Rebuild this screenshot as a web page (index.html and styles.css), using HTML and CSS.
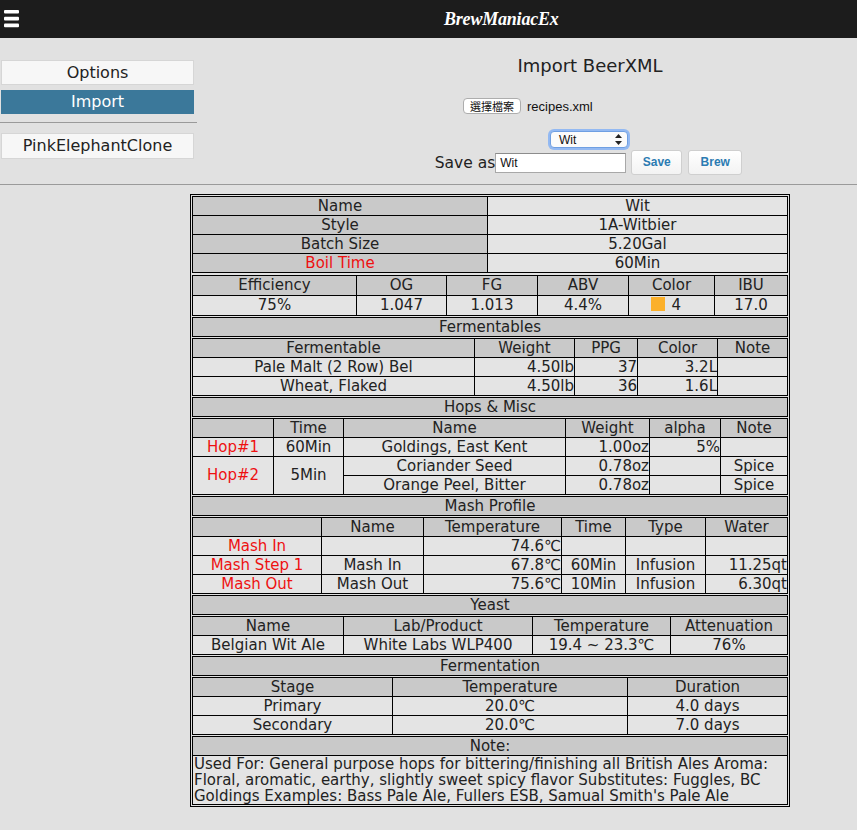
FILE: index.html
```html
<!DOCTYPE html>
<html>
<head>
<meta charset="utf-8">
<link rel="stylesheet" href="styles.css">
</head>
<body>
<header class="topbar">
  <svg class="burger" width="16" height="19" viewBox="0 0 16 19">
    <rect x="0" y="0" width="15" height="3.6" rx="1" fill="#fff"/>
    <rect x="0" y="6.8" width="15" height="3.6" rx="1" fill="#fff"/>
    <rect x="0" y="13.6" width="15" height="3.6" rx="1" fill="#fff"/>
  </svg>
  <div class="brand">BrewManiacEx</div>
</header>

<section class="top">
  <nav class="side">
    <div class="nav-btn">Options</div>
    <div class="nav-btn active">Import</div>
    <hr class="side-hr">
    <div class="nav-btn tall">PinkElephantClone</div>
  </nav>
  <div class="main">
    <h1 class="title">Import BeerXML</h1>
    <div class="file-row">
      <span class="file-btn">選擇檔案</span>
      <span class="file-name">recipes.xml</span>
    </div>
    <div class="select">
      <span>Wit</span>
      <svg width="7" height="11" viewBox="0 0 7 11"><path d="M3.5 0 L7 4 L0 4 Z M3.5 11 L7 7 L0 7 Z" fill="#222"/></svg>
    </div>
    <div class="save-row">
      <span class="save-label">Save as</span>
      <span class="text-input">Wit</span>
      <span class="btn save">Save</span>
      <span class="btn brew">Brew</span>
    </div>
  </div>
</section>

<div class="recipe">
  <table class="t">
    <colgroup><col style="width:295px"><col></colgroup>
    <tr><td class="h">Name</td><td>Wit</td></tr>
    <tr><td class="h">Style</td><td>1A-Witbier</td></tr>
    <tr><td class="h">Batch Size</td><td>5.20Gal</td></tr>
    <tr><td class="h red">Boil Time</td><td>60Min</td></tr>
  </table>

  <table class="t stats">
    <colgroup><col style="width:164px"><col style="width:90px"><col style="width:91px"><col style="width:91px"><col style="width:86px"><col></colgroup>
    <tr class="hr"><td>Efficiency</td><td>OG</td><td>FG</td><td>ABV</td><td>Color</td><td>IBU</td></tr>
    <tr><td>75%</td><td>1.047</td><td>1.013</td><td>4.4%</td><td class="color-cell"><span class="swatch"></span> 4</td><td>17.0</td></tr>
  </table>

  <table class="t sec"><tr><td>Fermentables</td></tr></table>
  <table class="t">
    <colgroup><col style="width:282px"><col style="width:100px"><col style="width:63px"><col style="width:80px"><col></colgroup>
    <tr class="hr"><td>Fermentable</td><td>Weight</td><td>PPG</td><td>Color</td><td>Note</td></tr>
    <tr><td>Pale Malt (2 Row) Bel</td><td class="r">4.50lb</td><td class="r">37</td><td class="r">3.2L</td><td></td></tr>
    <tr><td>Wheat, Flaked</td><td class="r">4.50lb</td><td class="r">36</td><td class="r">1.6L</td><td></td></tr>
  </table>

  <table class="t sec"><tr><td>Hops &amp; Misc</td></tr></table>
  <table class="t">
    <colgroup><col style="width:81px"><col style="width:70px"><col style="width:222px"><col style="width:84px"><col style="width:71px"><col></colgroup>
    <tr class="hr"><td></td><td>Time</td><td>Name</td><td>Weight</td><td>alpha</td><td>Note</td></tr>
    <tr><td class="red">Hop#1</td><td>60Min</td><td>Goldings, East Kent</td><td class="r">1.00oz</td><td class="r">5%</td><td></td></tr>
    <tr><td class="red" rowspan="2">Hop#2</td><td rowspan="2">5Min</td><td>Coriander Seed</td><td class="r">0.78oz</td><td></td><td>Spice</td></tr>
    <tr><td>Orange Peel, Bitter</td><td class="r">0.78oz</td><td></td><td>Spice</td></tr>
  </table>

  <table class="t sec"><tr><td>Mash Profile</td></tr></table>
  <table class="t">
    <colgroup><col style="width:129px"><col style="width:102px"><col style="width:138px"><col style="width:64px"><col style="width:80px"><col></colgroup>
    <tr class="hr"><td></td><td>Name</td><td>Temperature</td><td>Time</td><td>Type</td><td>Water</td></tr>
    <tr><td class="red">Mash In</td><td></td><td class="r">74.6℃</td><td></td><td></td><td></td></tr>
    <tr><td class="red">Mash Step 1</td><td>Mash In</td><td class="r">67.8℃</td><td>60Min</td><td>Infusion</td><td class="r">11.25qt</td></tr>
    <tr><td class="red">Mash Out</td><td>Mash Out</td><td class="r">75.6℃</td><td>10Min</td><td>Infusion</td><td class="r">6.30qt</td></tr>
  </table>

  <table class="t sec"><tr><td>Yeast</td></tr></table>
  <table class="t">
    <colgroup><col style="width:151px"><col style="width:189px"><col style="width:138px"><col></colgroup>
    <tr class="hr"><td>Name</td><td>Lab/Product</td><td>Temperature</td><td>Attenuation</td></tr>
    <tr><td>Belgian Wit Ale</td><td>White Labs WLP400</td><td>19.4 ~ 23.3℃</td><td>76%</td></tr>
  </table>

  <table class="t sec"><tr><td>Fermentation</td></tr></table>
  <table class="t">
    <colgroup><col style="width:200px"><col style="width:235px"><col></colgroup>
    <tr class="hr"><td>Stage</td><td>Temperature</td><td>Duration</td></tr>
    <tr><td>Primary</td><td>20.0℃</td><td>4.0 days</td></tr>
    <tr><td>Secondary</td><td>20.0℃</td><td>7.0 days</td></tr>
  </table>

  <table class="t note">
    <tr class="hr"><td>Note:</td></tr>
    <tr><td class="note-body">Used For: General purpose hops for bittering/finishing all British Ales Aroma: Floral, aromatic, earthy, slightly sweet spicy flavor Substitutes: Fuggles, BC Goldings Examples: Bass Pale Ale, Fullers ESB, Samual Smith's Pale Ale</td></tr>
  </table>
</div>
</body>
</html>
```
FILE: styles.css
```css
* { box-sizing: border-box; }
html, body { margin: 0; padding: 0; }
body {
  background: #e1e1e1;
  font-family: "DejaVu Sans", sans-serif;
  color: #222;
  overflow: hidden;
  width: 857px;
  height: 830px;
}
.topbar {
  height: 38px;
  background: #1c1c1c;
  display: flex;
  align-items: center;
  padding-left: 4px;
}
.burger { display: block; }
.brand {
  margin-left: 424px;
  font-family: "Liberation Serif", serif;
  font-style: italic;
  font-weight: bold;
  font-size: 18px;
  color: #fff;
  letter-spacing: -0.2px;
}
.top {
  display: flex;
  border-bottom: 1px solid #9a9a9a;
  height: 147px;
}
.side {
  width: 197px;
  flex: none;
  padding-top: 22px;
}
.nav-btn {
  width: 193px;
  height: 25px;
  margin-left: 1px;
  margin-bottom: 5px;
  background: #f7f7f7;
  border: 1px solid #d6d6d6;
  text-align: center;
  font-size: 16px;
  line-height: 23px;
  color: #222;
}
.nav-btn.active {
  background: #3b789a;
  border-color: #3b789a;
  color: #fff;
  height: 24px;
  line-height: 22px;
}
.nav-btn.tall { height: 26px; line-height: 24px; }
.side-hr {
  margin: 8px 0 10px 0;
  border: 0;
  border-top: 1px solid #9a9a9a;
  height: 0;
  width: 197px;
}
.main {
  flex: 1;
  display: flex;
  flex-direction: column;
  align-items: center;
  padding-left: 126px;
  padding-top: 16px;
}
.title {
  margin: 0;
  font-weight: normal;
  font-size: 18px;
  line-height: 24px;
  color: #222;
}
.file-row {
  margin-top: 20px;
  width: 254px;
  display: flex;
  align-items: center;
}
.file-btn {
  display: inline-block;
  width: 58px;
  height: 16px;
  border: 1px solid #adadad;
  border-radius: 4px;
  background: #fff;
  font-family: "Noto Sans CJK TC", sans-serif;
  font-size: 11px;
  line-height: 14px;
  text-align: center;
  color: #111;
}
.file-name {
  margin-left: 6px;
  font-family: "Liberation Sans", sans-serif;
  font-size: 13px;
  color: #111;
}
.select {
  margin-top: 17px;
  margin-right: 2px;
  width: 78px;
  height: 17px;
  border: 1px solid #6f9fe2;
  border-radius: 4px;
  box-shadow: 0 0 0 2px #93b9f2;
  background: #fbfbfb;
  display: flex;
  align-items: center;
  justify-content: space-between;
  padding: 0 5px 0 8px;
  font-family: "Liberation Sans", sans-serif;
  font-size: 12px;
  color: #111;
}
.select svg { display: block; }
.save-row {
  margin-top: 2px;
  margin-right: 3px;
  display: flex;
  align-items: center;
}
.save-label {
  font-size: 15.5px;
  margin-right: 0;
}
.text-input {
  width: 131px;
  height: 20px;
  border: 1px solid #a8a8a8;
  border-top-color: #8c8c8c;
  background: #fff;
  font-family: "Liberation Sans", sans-serif;
  font-size: 12px;
  line-height: 18px;
  padding-left: 4px;
  color: #111;
}
.btn {
  height: 25px;
  border: 1px solid #cfcfcf;
  border-radius: 3px;
  background: linear-gradient(#ffffff, #f3f3f3);
  font-family: "Liberation Sans", sans-serif;
  font-weight: bold;
  font-size: 12px;
  line-height: 23px;
  color: #2b7bb2;
  text-align: center;
}
.save { width: 51px; margin-left: 5px; }
.brew { width: 54px; margin-left: 6px; }

.recipe {
  margin: 9px 0 0 190px;
  width: 600px;
  border: 1px solid #000;
  padding: 1px;
  display: flex;
  flex-direction: column;
  gap: 1px;
}
.t {
  width: 100%;
  border-collapse: collapse;
  table-layout: fixed;
  border: 1px solid #000;
  font-size: 15px;
}
.t td {
  border: 1px solid #000;
  padding: 0 1px;
  height: 19px;
  line-height: 17px;
  text-align: center;
  background: #e4e4e4;
  white-space: nowrap;
  overflow: hidden;
}
.stats { margin-top: 1px; }
.stats td { height: 20px; }
.t td.h, .t tr.hr td, .t.sec td { background: #c9c9c9; }
.t td.r { text-align: right; padding-right: 0; }
.red { color: #ee1111; }
.t td.color-cell { padding-right: 12px; }
.swatch {
  display: inline-block;
  width: 14px;
  height: 14px;
  background: #fbb02b;
  vertical-align: -1px;
  margin-right: 2px;
}
.note .note-body {
  text-align: left;
  white-space: normal;
  line-height: 16px;
  padding: 0 0 0 1px;
  height: auto;
}
```
